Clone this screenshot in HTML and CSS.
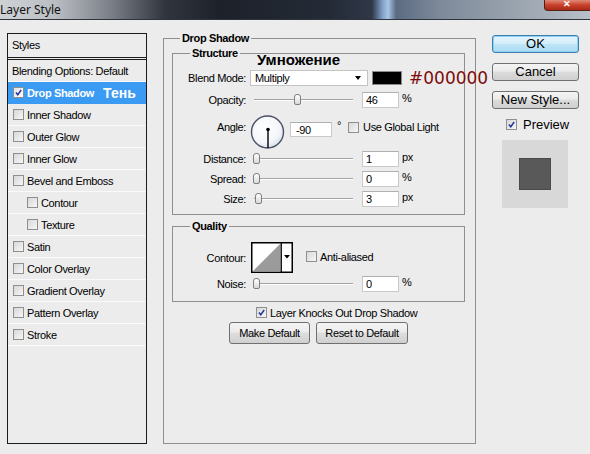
FILE: index.html
```html
<!DOCTYPE html>
<html lang="en">
<head>
    <meta charset="UTF-8">
    <title>Layer Style</title>
    <link rel="stylesheet" href="styles.css">
</head>
<body>
    <div class="titlebar">
        <span class="title">Layer Style</span>
        <span class="close-btn">&#10005;</span>
    </div>

    <div class="dialog">
        <!-- styles list on the left -->
        <div class="styles-list">
            <div class="styles-head">Styles</div>
            <div class="style-rows">
                <div class="style-row plain">Blending Options: Default</div>
                <div class="style-row active">
                    <span class="chk"><svg viewBox="0 0 11 11"><path d="M2.3 5.6 L4.6 8.3 L8.8 2.4" /></svg></span>
                    Drop Shadow <span class="note-ten">Тень</span>
                </div>
                <div class="style-row"><span class="chk"></span>Inner Shadow</div>
                <div class="style-row"><span class="chk"></span>Outer Glow</div>
                <div class="style-row"><span class="chk"></span>Inner Glow</div>
                <div class="style-row"><span class="chk"></span>Bevel and Emboss</div>
                <div class="style-row sub"><span class="chk"></span>Contour</div>
                <div class="style-row sub"><span class="chk"></span>Texture</div>
                <div class="style-row"><span class="chk"></span>Satin</div>
                <div class="style-row"><span class="chk"></span>Color Overlay</div>
                <div class="style-row"><span class="chk"></span>Gradient Overlay</div>
                <div class="style-row"><span class="chk"></span>Pattern Overlay</div>
                <div class="style-row"><span class="chk"></span>Stroke</div>
            </div>
        </div>

        <!-- drop shadow settings -->
        <fieldset class="group main">
            <legend>Drop Shadow</legend>

            <fieldset class="group structure">
                <legend>Structure</legend>
                <div class="note-blend">Умножение</div>

                <div class="field blend-row">
                    <span class="lbl">Blend Mode:</span>
                    <div class="select">Multiply<span class="arrow"></span></div>
                    <div class="swatch"></div>
                    <span class="note-hex">#000000</span>
                </div>

                <div class="field opacity-row">
                    <span class="lbl">Opacity:</span>
                    <div class="slider"><div class="track"></div><span class="thumb" style="left:44px"></span></div>
                    <div class="num">46</div>
                    <span class="unit">%</span>
                </div>

                <div class="field angle-row">
                    <span class="lbl">Angle:</span>
                    <svg class="dial" viewBox="0 0 35 34" width="35" height="34">
                        <defs>
                            <radialGradient id="dialFill" cx="0.4" cy="0.35" r="0.7">
                                <stop offset="0" stop-color="#ffffff"/>
                                <stop offset="0.7" stop-color="#f3f5f9"/>
                                <stop offset="1" stop-color="#d6dce8"/>
                            </radialGradient>
                        </defs>
                        <circle cx="17.5" cy="17" r="16" fill="url(#dialFill)" stroke="#4a5068" stroke-width="1.4"/>
                        <line x1="18" y1="14.5" x2="18" y2="33" stroke="#000" stroke-width="1.4"/>
                        <circle cx="18" cy="14.5" r="1.8" fill="#000"/>
                    </svg>
                    <div class="num angle-num">-90</div>
                    <span class="deg">&deg;</span>
                    <span class="chk light"></span>
                    <span class="chk-text">Use Global Light</span>
                </div>

                <div class="field slide-row">
                    <span class="lbl">Distance:</span>
                    <div class="slider"><div class="track"></div><span class="thumb" style="left:3px"></span></div>
                    <div class="num">1</div>
                    <span class="unit">px</span>
                </div>

                <div class="field slide-row">
                    <span class="lbl">Spread:</span>
                    <div class="slider"><div class="track"></div><span class="thumb" style="left:3px"></span></div>
                    <div class="num">0</div>
                    <span class="unit">%</span>
                </div>

                <div class="field slide-row">
                    <span class="lbl">Size:</span>
                    <div class="slider"><div class="track"></div><span class="thumb" style="left:5px"></span></div>
                    <div class="num">3</div>
                    <span class="unit">px</span>
                </div>
            </fieldset>

            <fieldset class="group quality">
                <legend>Quality</legend>

                <div class="field contour-row">
                    <span class="lbl">Contour:</span>
                    <svg class="contour" viewBox="0 0 42 31" width="42" height="31">
                        <rect x="0.75" y="0.75" width="40.5" height="29.5" fill="#fff" stroke="#000" stroke-width="1.5"/>
                        <polygon points="1.5,29.5 29.5,1.5 29.5,29.5" fill="#9b9b9b"/>
                        <line x1="30.25" y1="1" x2="30.25" y2="30" stroke="#000" stroke-width="1.3"/>
                        <polygon points="33,13 39,13 36,16.5" fill="#000"/>
                    </svg>
                    <span class="chk anti"></span>
                    <span class="chk-text">Anti-aliased</span>
                </div>

                <div class="field slide-row noise-row">
                    <span class="lbl">Noise:</span>
                    <div class="slider"><div class="track"></div><span class="thumb" style="left:3px"></span></div>
                    <div class="num">0</div>
                    <span class="unit">%</span>
                </div>
            </fieldset>

            <div class="knock-row">
                <span class="chk"><svg viewBox="0 0 11 11"><path d="M2.3 5.6 L4.6 8.3 L8.8 2.4" /></svg></span>
                <span class="chk-text">Layer Knocks Out Drop Shadow</span>
            </div>

            <div class="default-btns">
                <button class="btn btn-make">Make Default</button>
                <button class="btn btn-reset">Reset to Default</button>
            </div>
        </fieldset>

        <!-- dialog buttons -->
        <div class="side">
            <button class="side-btn ok">OK</button>
            <button class="side-btn">Cancel</button>
            <button class="side-btn">New Style...</button>
            <div class="preview-row">
                <span class="chk"><svg viewBox="0 0 11 11"><path d="M2.3 5.6 L4.6 8.3 L8.8 2.4" /></svg></span>
                Preview
            </div>
            <div class="preview-box">
                <div class="preview-square"></div>
            </div>
        </div>
    </div>
</body>
</html>
```

FILE: styles.css
```css
* {
    margin: 0;
    padding: 0;
    box-sizing: border-box;
}

body {
    width: 590px;
    height: 454px;
    overflow: hidden;
    background: #ececec;
    font-family: 'Liberation Sans', Arial, sans-serif;
    font-size: 11px;
    letter-spacing: -0.35px;
    color: #000;
}

/* window title */
.titlebar {
    height: 20px;
    border-bottom: 1px solid #2e343e;
    display: flex;
    align-items: center;
    overflow: hidden;
    letter-spacing: 0;
    background: linear-gradient(to right, #cfd2d5 0, #babec3 55px, #7c8189 110px, #30353e 165px, #1c212a 220px, #252b36 330px, #2f3848 372px, #7d9cc2 382px, #a9c6e6 388px, #5b6b82 396px, #7e8a9a 440px, #a3acb6 540px, #b8c0c8 590px);
}

.title {
    font-family: 'Noto Sans', sans-serif;
    font-size: 12px;
    margin-left: 0;
    color: #111;
}

.close-btn {
    margin-left: auto;
    margin-right: -12px;
    align-self: flex-start;
    width: 58px;
    height: 11px;
    border: 1px solid #5a1d14;
    border-top: none;
    border-radius: 0 0 4px 4px;
    background: linear-gradient(#e08a78, #c8412c 50%, #a82a16);
    color: #fff;
    font-size: 9px;
    font-weight: bold;
    line-height: 9px;
    text-align: center;
    padding-right: 12px;
}

.dialog {
    display: flex;
    align-items: flex-start;
    padding: 12px 0 0 7px;
}

/* left list */
.styles-list {
    width: 140px;
    height: 411px;
    margin-top: 1px;
    margin-right: 16px;
    border: 1px solid #1c1c1c;
    flex: none;
}

.styles-head {
    height: 24px;
    line-height: 23px;
    padding-left: 4px;
    border-bottom: 1px solid #1c1c1c;
}

.style-rows {
    margin-top: 1px;
    border-top: 1px solid #1c1c1c;
}

.style-row {
    height: 22px;
    display: flex;
    align-items: center;
    gap: 3px;
    padding-left: 5px;
    border-bottom: 1px solid #fafafa;
    white-space: nowrap;
}

.style-row.plain {
    padding-left: 4px;
}

.style-row.sub {
    padding-left: 19px;
}

.style-row.active {
    background: #3b9af2;
    border-bottom-color: #3b9af2;
    color: #fff;
    font-weight: bold;
}

.note-ten {
    font-size: 14px;
    letter-spacing: 0;
    margin-left: 6px;
}

/* checkboxes */
.chk {
    width: 11px;
    height: 11px;
    flex: none;
    display: inline-block;
    border: 1px solid #8e8f8f;
    background: linear-gradient(135deg, #d8d8d8, #f6f6f6);
}

.chk svg {
    display: block;
    width: 9px;
    height: 9px;
}

.chk path {
    fill: none;
    stroke: #26359a;
    stroke-width: 1.8;
}

.style-row.active .chk {
    background: linear-gradient(135deg, #e4e4e4, #ffffff);
}

.chk-text {
    white-space: nowrap;
}

/* group boxes */
.group {
    border: 1px solid #8f8f8f;
    min-width: 0;
}

.group > legend {
    font-weight: bold;
    line-height: 13px;
    padding: 0 2px;
}

.main {
    width: 313px;
    height: 412px;
    padding: 2px 10px 0 8px;
    flex: none;
}

.main > legend {
    margin-left: 8px;
}

.structure,
.quality {
    padding: 0 0 7px 0;
}

.structure > legend,
.quality > legend {
    margin-left: 17px;
}

.quality {
    margin-top: 5px;
    padding-bottom: 9px;
}

.note-blend {
    margin-top: -10px;
    height: 20px;
    line-height: 20px;
    padding-left: 84px;
    font-size: 15px;
    font-weight: bold;
    letter-spacing: 0;
}

/* setting rows */
.field {
    display: flex;
    align-items: center;
    height: 16px;
    white-space: nowrap;
}

.lbl {
    width: 73px;
    margin-right: 4px;
    text-align: right;
    flex: none;
}

.opacity-row {
    margin-top: 6px;
}

.angle-row {
    margin-top: 7px;
    height: 34px;
    align-items: flex-start;
}

.angle-row .lbl {
    margin-top: 6px;
}

.slide-row {
    margin-top: 4px;
}

.angle-row + .slide-row {
    margin-top: 2px;
}

.select {
    width: 118px;
    height: 16px;
    flex: none;
    display: flex;
    align-items: center;
    justify-content: space-between;
    padding: 0 6px 0 4px;
    background: #fff;
    border: 1px solid #c4c4c4;
}

.arrow {
    width: 0;
    height: 0;
    border-left: 3.5px solid transparent;
    border-right: 3.5px solid transparent;
    border-top: 4px solid #000;
}

.swatch {
    width: 30px;
    height: 14px;
    margin-left: 4px;
    flex: none;
    background: #000;
    border: 1px solid #8a8a8a;
}

.note-hex {
    margin-left: 7px;
    font-family: 'DejaVu Sans', sans-serif;
    font-size: 17px;
    letter-spacing: 0;
    color: #7e0b0b;
}

.slider {
    width: 103px;
    height: 14px;
    flex: none;
    position: relative;
    display: flex;
    align-items: center;
}

.track {
    margin-left: 4px;
    flex: 1;
    height: 2px;
    border-top: 1px solid #a3a3a3;
    border-bottom: 1px solid #ffffff;
}

.thumb {
    position: absolute;
    top: 1px;
    width: 7px;
    height: 11px;
    border: 1px solid #7f7f7f;
    border-radius: 3px 3px 2px 2px;
    background: linear-gradient(#ffffff, #d9d9d9);
}

.num {
    width: 37px;
    height: 16px;
    margin-left: 9px;
    flex: none;
    padding-left: 3px;
    line-height: 14px;
    background: #fff;
    border: 1px solid #c9c9c9;
    border-top-color: #b0b0b0;
}

.unit {
    margin-left: 3px;
    margin-top: -4px;
}

.dial {
    flex: none;
    display: block;
}

.num.angle-num {
    width: 42px;
    height: 15px;
    margin-left: 5px;
    margin-top: 7px;
    padding-left: 5px;
}

.deg {
    margin-left: 5px;
    margin-top: 4px;
}

.chk.light {
    margin-left: 7px;
    margin-top: 7px;
}

.angle-row .chk-text {
    margin-left: 4px;
    margin-top: 6px;
}

/* quality */
.contour-row {
    margin-top: 9px;
    height: 31px;
}

.contour {
    display: block;
    flex: none;
    margin-left: 1px;
}

.chk.anti {
    margin-left: 13px;
    margin-top: -2px;
}

.contour-row .chk-text {
    margin-left: 3px;
    margin-top: -2px;
}

.noise-row {
    margin-top: 3px;
}

.knock-row {
    margin-top: 4px;
    height: 13px;
    padding-left: 84px;
    display: flex;
    align-items: center;
    gap: 3px;
}

.default-btns {
    margin-top: 3px;
    display: flex;
    justify-content: center;
    gap: 6px;
}

.btn {
    height: 22px;
    font-family: inherit;
    font-size: 11px;
    letter-spacing: -0.35px;
    color: #000;
    border: 1px solid #707070;
    border-radius: 3px;
    background: linear-gradient(#f4f4f4, #ececec 45%, #dedede 50%, #d0d0d0);
}

.btn-make {
    width: 81px;
}

.btn-reset {
    width: 92px;
}

/* right column */
.side {
    width: 87px;
    margin-left: 16px;
    flex: none;
    display: flex;
    flex-direction: column;
    letter-spacing: 0;
}

.side-btn {
    height: 18px;
    font-family: inherit;
    font-size: 13px;
    line-height: 14px;
    color: #000;
    border: 1px solid #707070;
    border-radius: 3px;
    background: linear-gradient(#f4f4f4, #ebebeb 45%, #dcdcdc 50%, #cfcfcf);
    margin-top: 10px;
}

.side-btn.ok {
    margin-top: 3px;
    border-color: #3c7fb1;
    box-shadow: inset 0 0 0 1px #8fd0f0;
    background: linear-gradient(#e6f5fc, #d2edf9 50%, #bfe5f7 51%, #a9dbf3);
}

.preview-row {
    margin-top: 9px;
    height: 13px;
    padding-left: 14px;
    display: flex;
    align-items: center;
    gap: 6px;
    font-size: 13px;
}

.preview-box {
    width: 66px;
    height: 68px;
    margin: 9px 0 0 10px;
    background: #d8d8d8;
    display: flex;
    align-items: center;
    justify-content: center;
}

.preview-square {
    width: 32px;
    height: 32px;
    background: #595959;
    border: 1px solid #4a4a4a;
}
```
